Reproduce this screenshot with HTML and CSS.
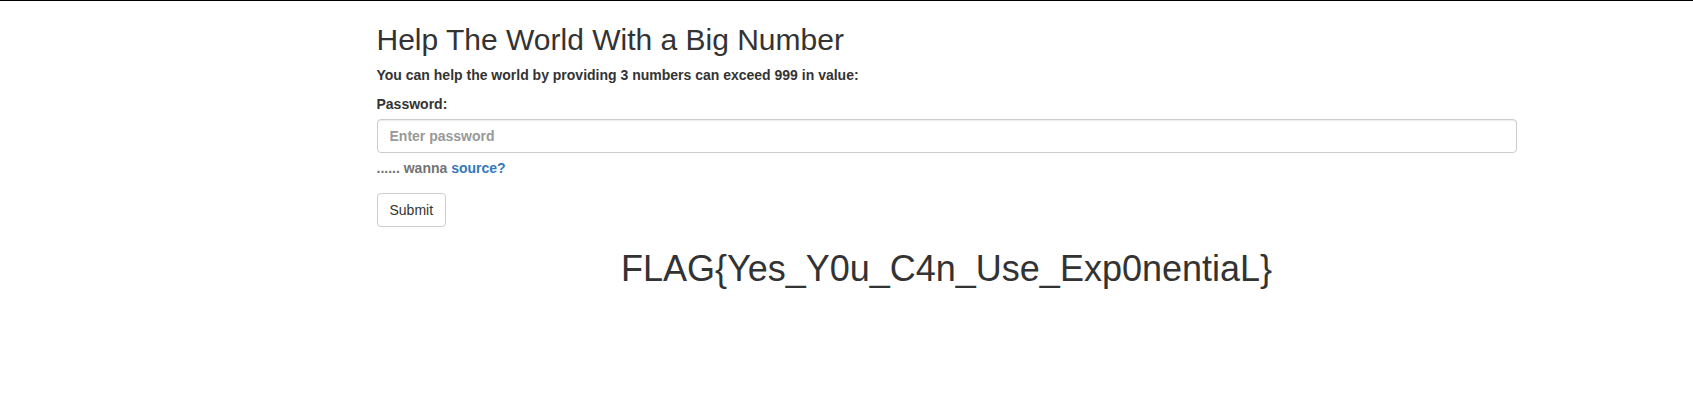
FILE: index.html
```html
<!DOCTYPE html>
<html>
<head>
<meta charset="utf-8">
<title>Help The World With a Big Number</title>
<link rel="stylesheet" href="styles.css">
</head>
<body>
<div class="page">
  <div class="container">
    <h2 class="title">Help The World With a Big Number</h2>
    <form class="form">
      <p class="lead-text">You can help the world by providing 3 numbers can exceed 999 in value:</p>
      <div class="form-group">
        <label class="label" for="pwd">Password:</label>
        <input class="form-control" id="pwd" type="password" placeholder="Enter password">
        <span class="help-block">...... wanna <a class="link" href="#">source?</a></span>
      </div>
      <button class="btn" type="button">Submit</button>
    </form>
    <h1 class="flag">FLAG{Yes_Y0u_C4n_Use_Exp0nentiaL}</h1>
  </div>
</div>
</body>
</html>
```

FILE: styles.css
```css
* { box-sizing: border-box; }
html, body { margin: 0; padding: 0; background: #fff; }
body {
  font-family: "Liberation Sans", Arial, Helvetica, sans-serif;
  font-size: 14px;
  line-height: 1.42857143;
  color: #333;
  border-top: 1px solid #000;
}
.page {
  padding-left: 200px;
}
.container {
  width: 1170px;
  margin: 0 auto;
  padding: 0 15px;
}
.title {
  font-size: 30px;
  font-weight: 500;
  line-height: 1.1;
  margin: 22px 0 9px;
}
.form { margin: 0; }
.lead-text {
  font-weight: 700;
  margin: 0 0 9px;
}
.form-group { margin-bottom: 15px; }
.label {
  display: inline-block;
  max-width: 100%;
  margin-bottom: 5px;
  font-weight: 700;
}
.form-control {
  display: block;
  width: 100%;
  height: 34px;
  padding: 6px 12px;
  font-family: inherit;
  font-size: 14px;
  line-height: 1.42857143;
  color: #555;
  background: #fff;
  border: 1px solid #ccc;
  border-radius: 4px;
  box-shadow: inset 0 1px 1px rgba(0,0,0,.075);
  outline: none;
}
.form-control::placeholder { color: #999; font-weight: 700; opacity: 1; }
.help-block {
  display: block;
  margin-top: 5px;
  margin-bottom: 10px;
  color: #737373;
  font-weight: 700;
}
.link { color: #337ab7; text-decoration: none; }
.btn {
  display: inline-block;
  padding: 6px 12px;
  font-family: inherit;
  font-size: 14px;
  line-height: 1.42857143;
  color: #333;
  background: #fff;
  border: 1px solid #ccc;
  border-radius: 4px;
  cursor: pointer;
}
.flag {
  font-size: 36px;
  font-weight: 500;
  line-height: 1.1;
  margin: 22px 0 10px;
  text-align: center;
}
```
